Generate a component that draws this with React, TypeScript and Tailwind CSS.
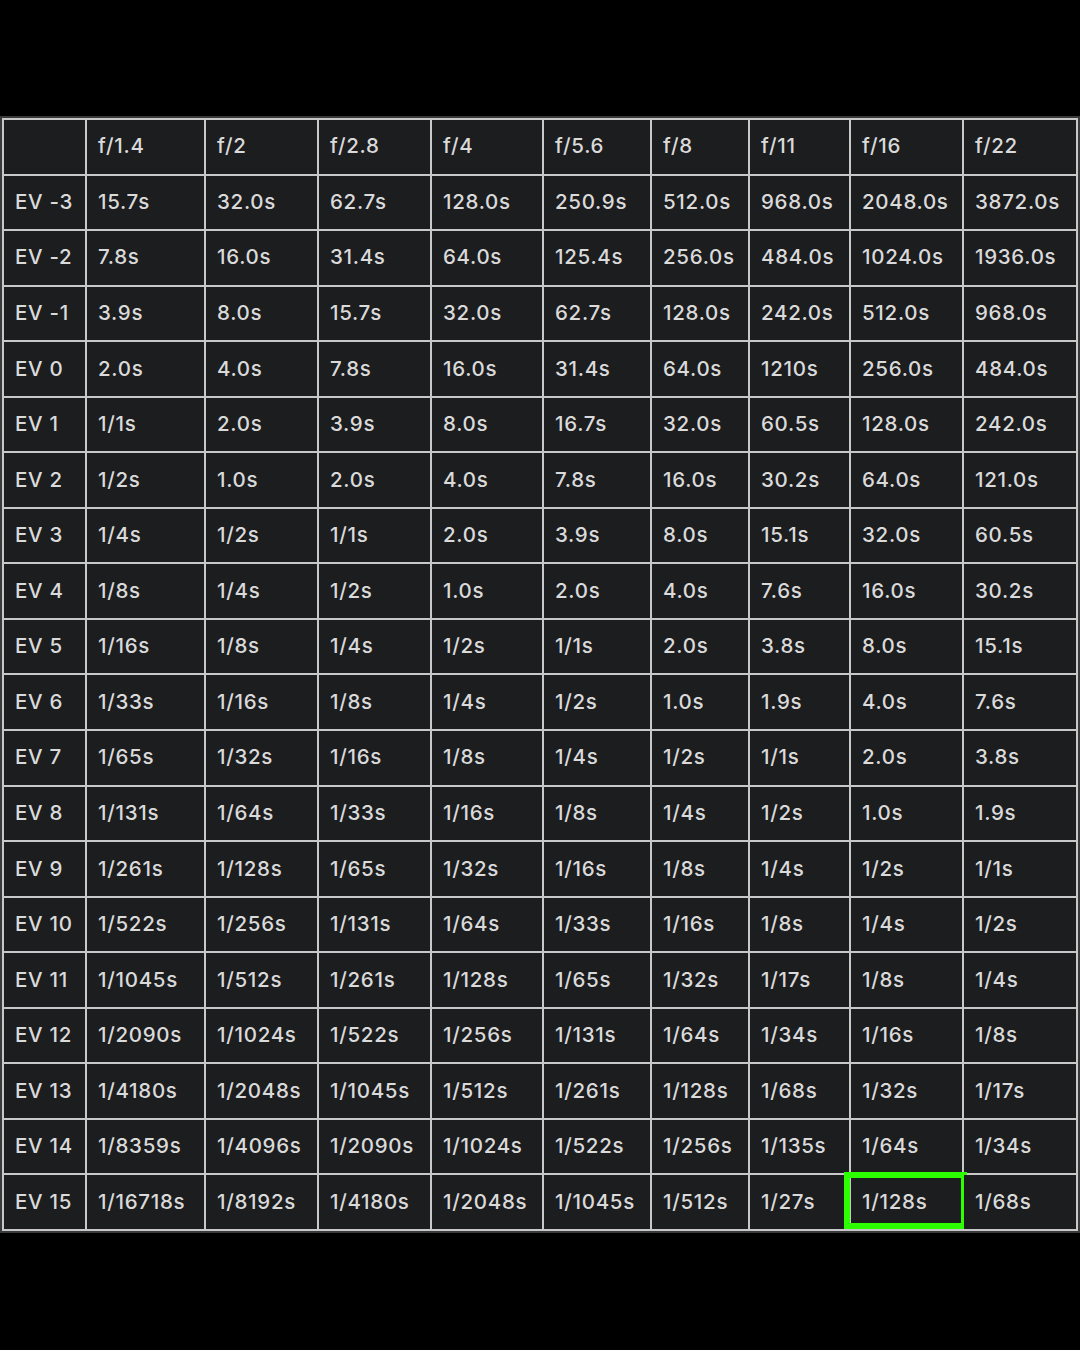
const apertures = ['f/1.4', 'f/2', 'f/2.8', 'f/4', 'f/5.6', 'f/8', 'f/11', 'f/16', 'f/22']

const rows: [string, string[]][] = [
  ['EV -3', ['15.7s', '32.0s', '62.7s', '128.0s', '250.9s', '512.0s', '968.0s', '2048.0s', '3872.0s']],
  ['EV -2', ['7.8s', '16.0s', '31.4s', '64.0s', '125.4s', '256.0s', '484.0s', '1024.0s', '1936.0s']],
  ['EV -1', ['3.9s', '8.0s', '15.7s', '32.0s', '62.7s', '128.0s', '242.0s', '512.0s', '968.0s']],
  ['EV 0', ['2.0s', '4.0s', '7.8s', '16.0s', '31.4s', '64.0s', '1210s', '256.0s', '484.0s']],
  ['EV 1', ['1/1s', '2.0s', '3.9s', '8.0s', '16.7s', '32.0s', '60.5s', '128.0s', '242.0s']],
  ['EV 2', ['1/2s', '1.0s', '2.0s', '4.0s', '7.8s', '16.0s', '30.2s', '64.0s', '121.0s']],
  ['EV 3', ['1/4s', '1/2s', '1/1s', '2.0s', '3.9s', '8.0s', '15.1s', '32.0s', '60.5s']],
  ['EV 4', ['1/8s', '1/4s', '1/2s', '1.0s', '2.0s', '4.0s', '7.6s', '16.0s', '30.2s']],
  ['EV 5', ['1/16s', '1/8s', '1/4s', '1/2s', '1/1s', '2.0s', '3.8s', '8.0s', '15.1s']],
  ['EV 6', ['1/33s', '1/16s', '1/8s', '1/4s', '1/2s', '1.0s', '1.9s', '4.0s', '7.6s']],
  ['EV 7', ['1/65s', '1/32s', '1/16s', '1/8s', '1/4s', '1/2s', '1/1s', '2.0s', '3.8s']],
  ['EV 8', ['1/131s', '1/64s', '1/33s', '1/16s', '1/8s', '1/4s', '1/2s', '1.0s', '1.9s']],
  ['EV 9', ['1/261s', '1/128s', '1/65s', '1/32s', '1/16s', '1/8s', '1/4s', '1/2s', '1/1s']],
  ['EV 10', ['1/522s', '1/256s', '1/131s', '1/64s', '1/33s', '1/16s', '1/8s', '1/4s', '1/2s']],
  ['EV 11', ['1/1045s', '1/512s', '1/261s', '1/128s', '1/65s', '1/32s', '1/17s', '1/8s', '1/4s']],
  ['EV 12', ['1/2090s', '1/1024s', '1/522s', '1/256s', '1/131s', '1/64s', '1/34s', '1/16s', '1/8s']],
  ['EV 13', ['1/4180s', '1/2048s', '1/1045s', '1/512s', '1/261s', '1/128s', '1/68s', '1/32s', '1/17s']],
  ['EV 14', ['1/8359s', '1/4096s', '1/2090s', '1/1024s', '1/522s', '1/256s', '1/135s', '1/64s', '1/34s']],
  ['EV 15', ['1/16718s', '1/8192s', '1/4180s', '1/2048s', '1/1045s', '1/512s', '1/27s', '1/128s', '1/68s']],
]

function Cell({ children, highlight }: { children?: React.ReactNode; highlight?: boolean }) {
  return (
    <div className="relative flex h-[53.55px] items-center bg-[#1c1d1f] pl-[11px] text-[20.5px] font-medium tracking-[0.7px] text-[#dadada]">
      {children}
      {highlight && (
        <div className="absolute -left-[7px] -right-[5px] -top-[3px] bottom-0 border-[6px] border-[#2bff00]" />
      )}
    </div>
  )
}

export default function App() {
  return (
    <div className="h-[1350px] w-[1080px] bg-black pt-[116px] font-['Inter','Liberation_Sans',sans-serif]">
      <div className="border-2 border-[#3a3a3c] bg-[#c8c8c8] p-[2px]">
        <div className="grid grid-cols-[81px_117px_111px_111px_110px_106px_96px_99px_111px_112px] gap-[2px]">
          <Cell />
          {apertures.map((a) => (
            <Cell key={a}>{a}</Cell>
          ))}
          {rows.map(([ev, values], ri) => [
            <Cell key={ev}>{ev}</Cell>,
            ...values.map((v, ci) => (
              <Cell key={`${ev}-${ci}`} highlight={ri === rows.length - 1 && ci === 7}>
                {v}
              </Cell>
            )),
          ])}
        </div>
      </div>
    </div>
  )
}
